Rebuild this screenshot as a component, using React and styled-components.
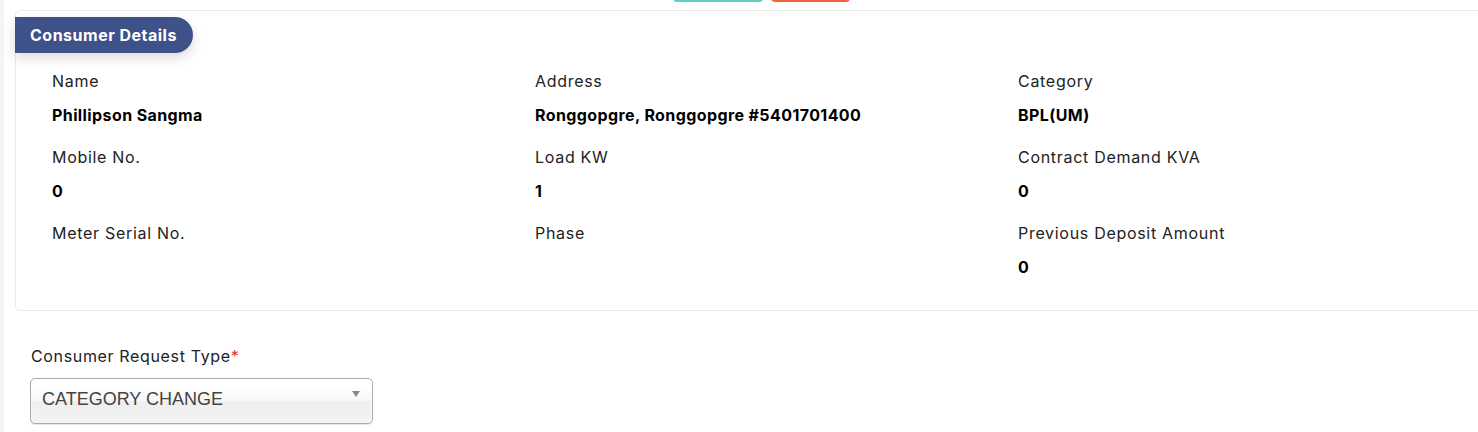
import React from 'react'
import styled, { createGlobalStyle } from 'styled-components'

const GlobalStyle = createGlobalStyle`
  html, body {
    margin: 0;
    padding: 0;
    background: #ffffff;
    overflow: hidden;
  }
  body {
    font-family: Inter, 'Open Sans', sans-serif;
    color: #222222;
  }
`

const Page = styled.div`
  display: flex;
  min-height: 432px;
`
const SideStrip = styled.div`
  width: 4px;
  flex-shrink: 0;
  background: #f3f3fa;
`
const Main = styled.div`
  flex: 1;
  padding-left: 11px;
`
const ActionBar = styled.div`
  display: flex;
  height: 2px;
  overflow: hidden;
  align-items: flex-end;
  padding-left: 658px;
  gap: 8px;
`
const ActionButton = styled.button`
  width: ${props => props.width}px;
  height: 30px;
  border: none;
  border-radius: 4px;
  background: ${props => props.color};
  margin-top: -28px;
`
const Card = styled.section`
  margin-top: 8px;
  width: 1480px;
  height: 301px;
  box-sizing: border-box;
  border: 1px solid #ebebeb;
  border-radius: 5px;
  padding-top: 6px;
`
const Badge = styled.div`
  display: inline-flex;
  align-items: center;
  height: 36px;
  margin-left: -1px;
  padding: 0 16px 0 15px;
  background: #3f5189;
  color: #ffffff;
  font-weight: 700;
  font-size: 16px;
  letter-spacing: 0.5px;
  border-radius: 0 20px 20px 0;
  box-shadow: 0 5px 12px rgba(0, 0, 0, 0.14);
`
const DetailGrid = styled.div`
  display: grid;
  grid-template-columns: repeat(3, 483px);
  row-gap: 20px;
  padding: 17px 0 0 36px;
`
const Field = styled.div`
  display: flex;
  flex-direction: column;
  gap: 12px;
`
const Label = styled.div`
  font-size: 16px;
  letter-spacing: 0.7px;
  line-height: 22px;
  color: #222222;
`
const Value = styled.div`
  font-size: 16px;
  letter-spacing: 0.4px;
  line-height: 22px;
  font-weight: 700;
  color: #000000;
  min-height: 22px;
`
const FormSection = styled.div`
  padding: 34px 0 0 15px;
`
const FormLabel = styled.label`
  display: block;
  font-size: 16px;
  letter-spacing: 0.65px;
  line-height: 22px;
  color: #222222;
  margin-left: 1px;
  span {
    color: #e3342f;
  }
`
const SelectBox = styled.div`
  margin-top: 11px;
  width: 343px;
  height: 46px;
  box-sizing: border-box;
  border: 1px solid #aaaaaa;
  border-radius: 5px;
  background: linear-gradient(#ffffff 20%, #f6f6f6 50%, #eeeeee 52%, #f4f4f4 100%);
  box-shadow: 0 0 3px #ffffff inset, 0 1px 1px rgba(0, 0, 0, 0.1);
  display: flex;
  align-items: center;
  justify-content: space-between;
  padding: 0 12px 4px 11px;
  font-family: 'Liberation Sans', Arial, sans-serif;
  font-size: 18px;
  color: #444444;
`
const Arrow = styled.div`
  width: 0;
  height: 0;
  border-left: 4px solid transparent;
  border-right: 4px solid transparent;
  border-top: 6px solid #888888;
  align-self: flex-start;
  margin-top: 12px;
`

const details = [
  { label: 'Name', value: 'Phillipson Sangma' },
  { label: 'Address', value: 'Ronggopgre, Ronggopgre #5401701400' },
  { label: 'Category', value: 'BPL(UM)' },
  { label: 'Mobile No.', value: '0' },
  { label: 'Load KW', value: '1' },
  { label: 'Contract Demand KVA', value: '0' },
  { label: 'Meter Serial No.', value: '' },
  { label: 'Phase', value: '' },
  { label: 'Previous Deposit Amount', value: '0' },
]

function App() {
  return (
    <>
      <GlobalStyle />
      <Page>
        <SideStrip />
        <Main>
          <ActionBar>
            <ActionButton width={90} color="#5fcfbf" />
            <ActionButton width={79} color="#f4623a" />
          </ActionBar>
          <Card>
            <Badge>Consumer Details</Badge>
            <DetailGrid>
              {details.map(d => (
                <Field key={d.label}>
                  <Label>{d.label}</Label>
                  <Value>{d.value}</Value>
                </Field>
              ))}
            </DetailGrid>
          </Card>
          <FormSection>
            <FormLabel>
              Consumer Request Type<span>*</span>
            </FormLabel>
            <SelectBox>
              CATEGORY CHANGE
              <Arrow />
            </SelectBox>
          </FormSection>
        </Main>
      </Page>
    </>
  )
}

export default App
